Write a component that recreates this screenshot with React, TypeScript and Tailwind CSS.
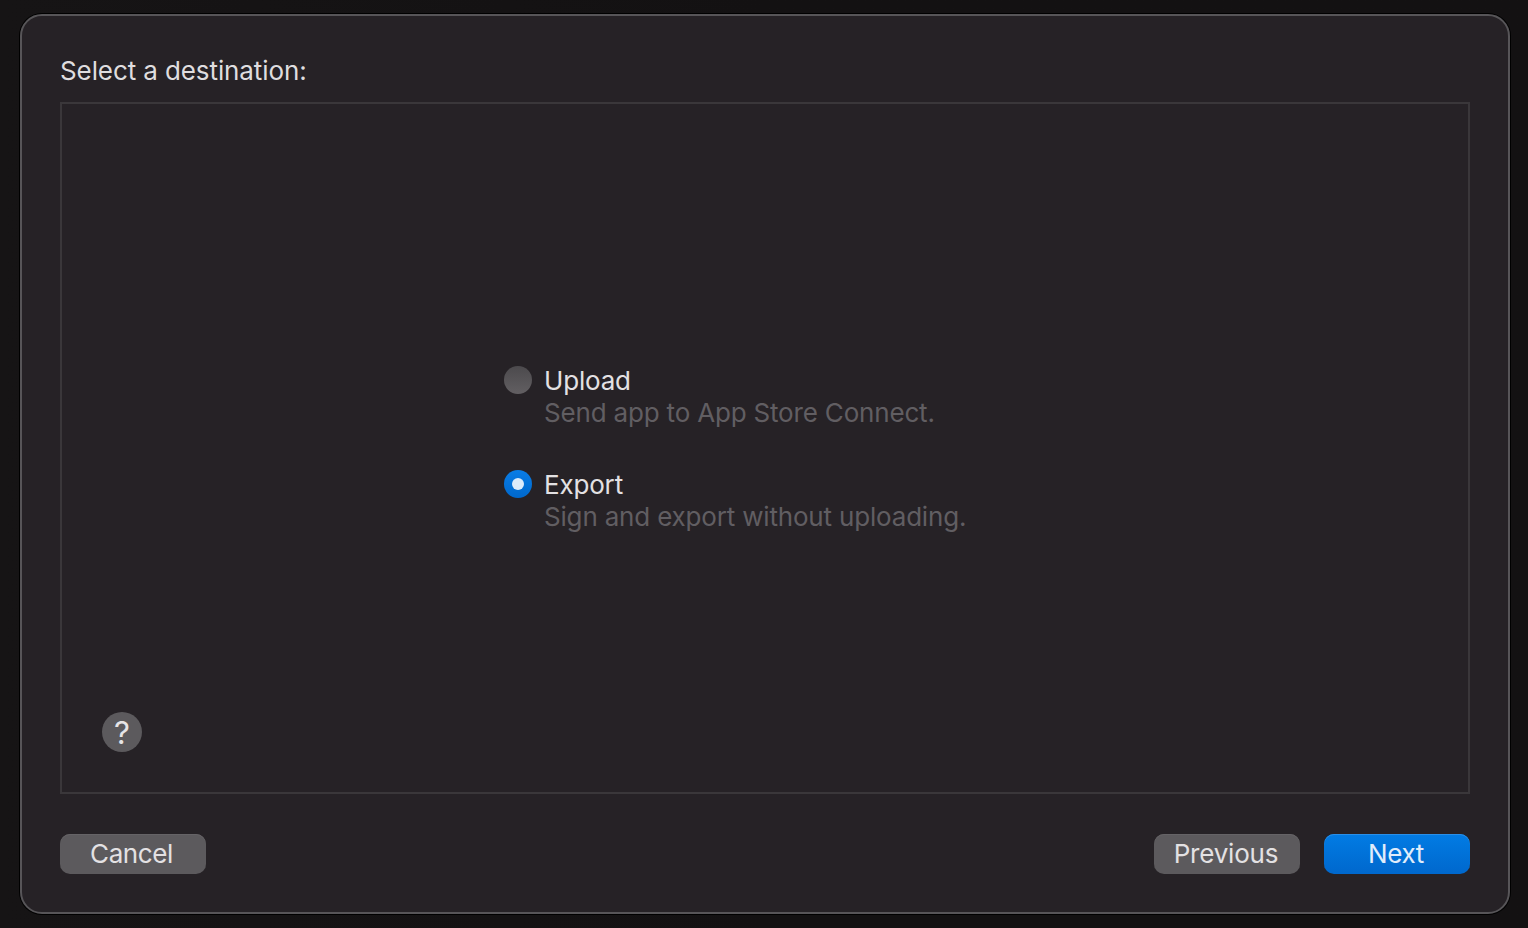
export default function App() {
  const font = { fontFamily: "Inter, 'Noto Sans', sans-serif" };
  return (
    <div style={font} className="h-[928px] w-[1528px] overflow-hidden bg-gradient-to-r from-[#161415] via-[#131112] to-[#131112] pl-[20px] pr-[18px] pt-[14px]">
      <div className="flex h-[900px] w-[1490px] flex-col rounded-[22px] border-2 border-[#575558] bg-[#262226] px-[38px] pb-[38px] pt-[39px] shadow-[0_0_0_1px_#000]">
        <div className="mb-[15px] h-[32px] text-[26px] leading-[32px] tracking-[-0.1px] text-[#dfdddf]">Select a destination:</div>
        <div className="grid h-[692px] grid-cols-1 grid-rows-1 border-2 border-[#3a373a]">
          <div className="col-start-1 row-start-1 ml-[442px] flex flex-col justify-center gap-[40px]">
            <div className="flex items-start gap-[12px]">
              <div className="mt-[2px] h-[28px] w-[28px] rounded-full bg-gradient-to-b from-[#4c4a4d] to-[#625f62]" />
              <div className="h-[64px] pt-[1px] text-[26px] leading-[32px] tracking-[-0.18px]">
                <div className="text-[#e3e1e3]">Upload</div>
                <div className="text-[#615e62]">Send app to App Store Connect.</div>
              </div>
            </div>
            <div className="flex items-start gap-[12px]">
              <div className="mt-[2px] flex h-[28px] w-[28px] items-center justify-center rounded-full bg-gradient-to-b from-[#0a7de6] to-[#0068cc]">
                <div className="h-[12px] w-[12px] rounded-full bg-[#dcebfa]" />
              </div>
              <div className="h-[64px] pt-[1px] text-[26px] leading-[32px] tracking-[-0.18px]">
                <div className="text-[#e3e1e3]">Export</div>
                <div className="text-[#615e62]">Sign and export without uploading.</div>
              </div>
            </div>
          </div>
          <div className="col-start-1 row-start-1 mb-[40px] ml-[40px] flex h-[40px] w-[40px] items-center justify-center self-end justify-self-start rounded-full bg-[#5c5a5d] text-[31px] leading-none text-[#e6e4e6]">?</div>
        </div>
        <div className="mt-[40px] flex h-[40px] items-center justify-between">
          <div className="flex h-[40px] w-[146px] items-center justify-center rounded-[10px] bg-[#5c5a5d] pb-[2px] pr-[3px] text-[26px] tracking-[-0.4px] text-[#e3e1e3] shadow-[inset_0_1px_0_#656366]">Cancel</div>
          <div className="flex gap-[24px]">
            <div className="flex h-[40px] w-[146px] items-center justify-center rounded-[10px] bg-[#5c5a5d] pb-[2px] pr-[2px] text-[26px] tracking-[-0.2px] text-[#e3e1e3] shadow-[inset_0_1px_0_#656366]">Previous</div>
            <div className="flex h-[40px] w-[146px] items-center justify-center rounded-[10px] bg-gradient-to-b from-[#027ce4] to-[#0068cd] pb-[2px] pr-[2px] text-[26px] tracking-[-0.3px] text-[#e0edfb] shadow-[inset_0_1px_0_#2a8fe8]">Next</div>
          </div>
        </div>
      </div>
    </div>
  );
}
